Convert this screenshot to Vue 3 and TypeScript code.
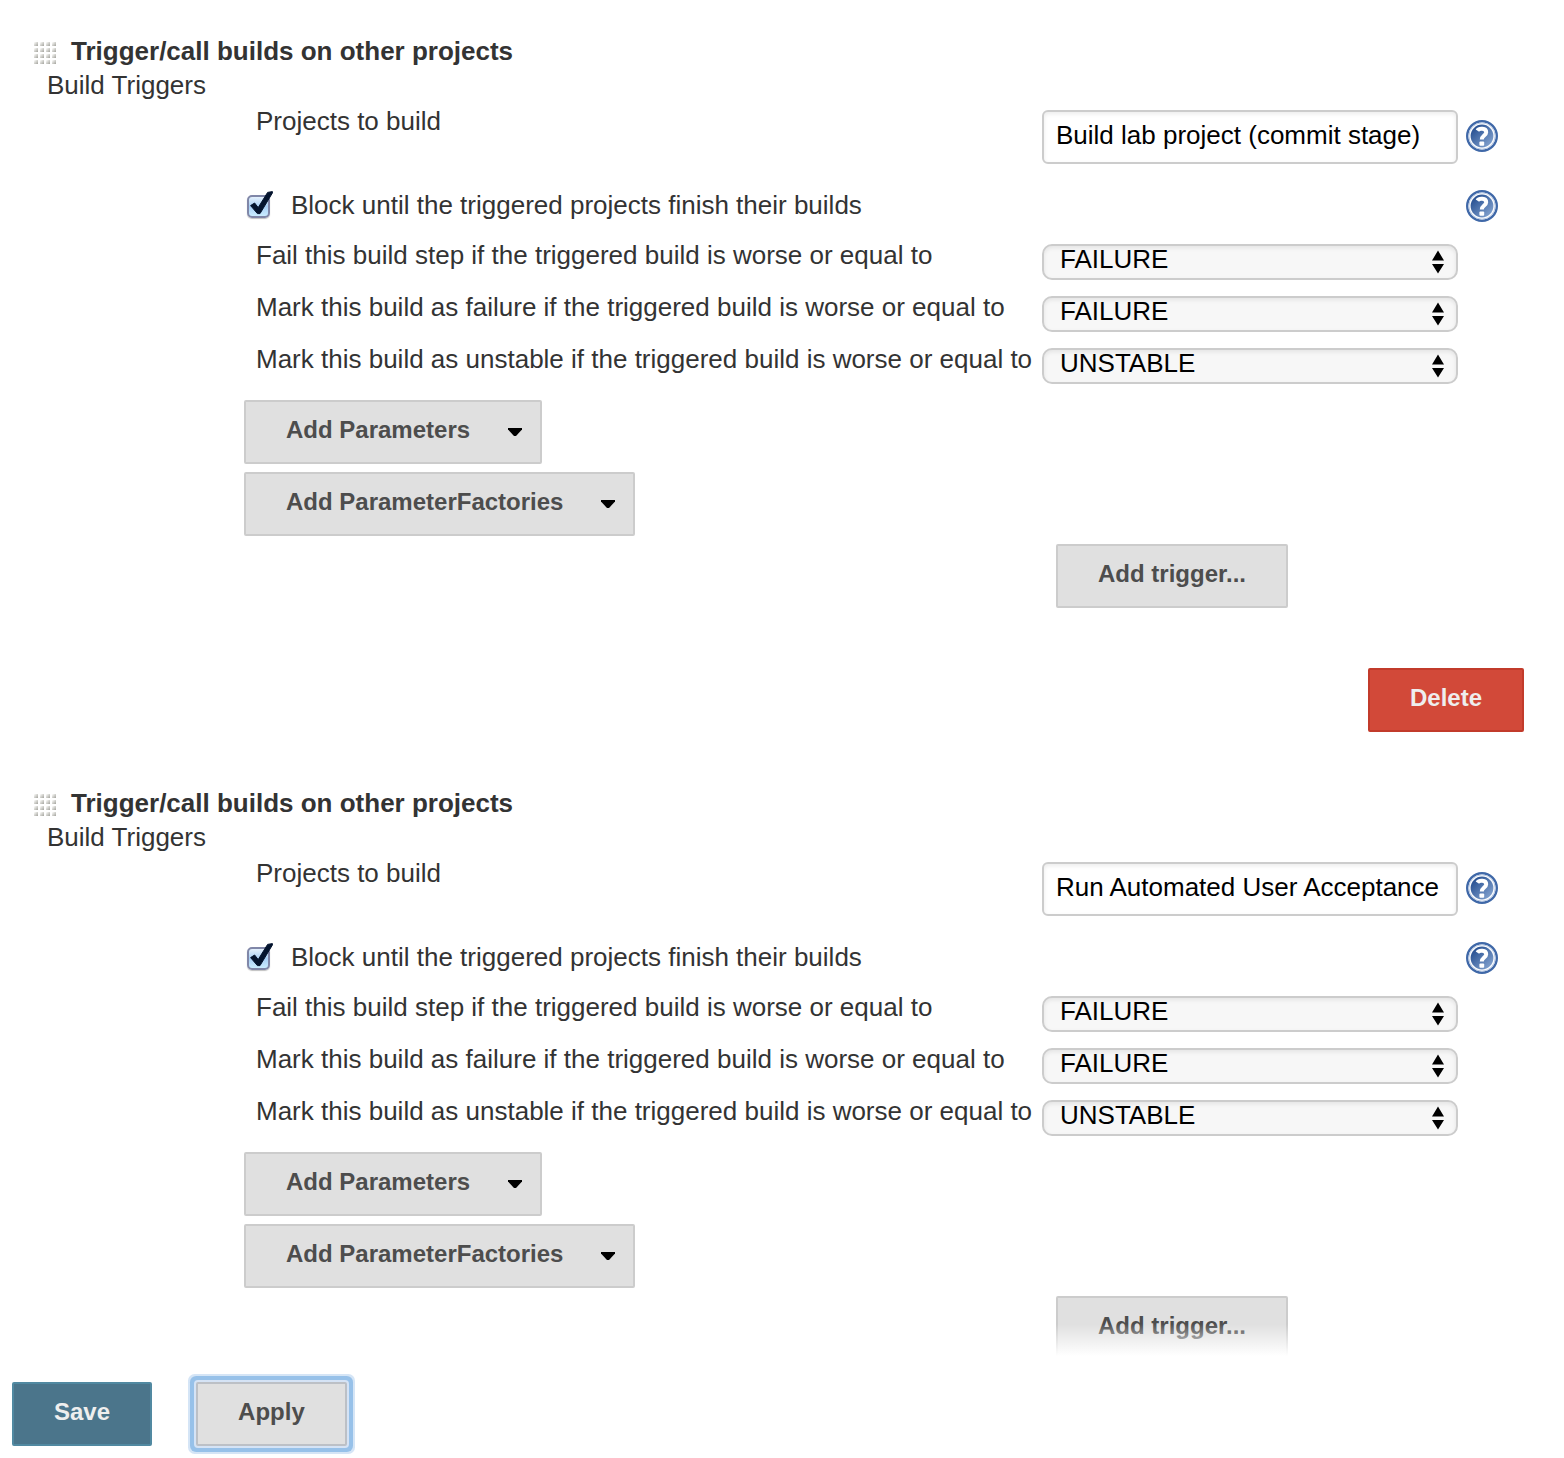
<script setup lang="ts">
import { reactive } from 'vue'

interface Threshold {
  label: string
  value: string
}

interface BuildStep {
  projects: string
  block: boolean
  thresholds: Threshold[]
  deletable: boolean
}

const results: string[] = ['SUCCESS', 'UNSTABLE', 'FAILURE']

const thresholds = (): Threshold[] => [
  { label: 'Fail this build step if the triggered build is worse or equal to', value: 'FAILURE' },
  { label: 'Mark this build as failure if the triggered build is worse or equal to', value: 'FAILURE' },
  { label: 'Mark this build as unstable if the triggered build is worse or equal to', value: 'UNSTABLE' },
]

const steps = reactive<BuildStep[]>([
  { projects: 'Build lab project (commit stage)', block: true, thresholds: thresholds(), deletable: true },
  { projects: 'Run Automated User Acceptance', block: true, thresholds: thresholds(), deletable: false },
])

const dots = [0, 6, 12, 18]
</script>

<template>
  <form class="page" @submit.prevent>
    <svg class="defs" width="0" height="0" aria-hidden="true">
      <defs>
        <linearGradient id="help-fill" x1="0" y1="0" x2="1" y2="1">
          <stop offset="0.2" stop-color="#2f5797" />
          <stop offset="0.85" stop-color="#7d9dcb" />
        </linearGradient>
        <linearGradient id="dot-fill" x1="0" y1="0" x2="1" y2="1">
          <stop offset="0.1" stop-color="#f8f8f6" />
          <stop offset="1" stop-color="#a2a29c" />
        </linearGradient>
        <symbol id="help" viewBox="0 0 32 32">
          <circle cx="16" cy="16" r="14.8" fill="#fff" stroke="#3f68a8" stroke-width="2.4" />
          <circle cx="16" cy="16" r="13.2" fill="none" stroke="#b9cae4" stroke-width="1" />
          <circle cx="16" cy="16" r="11.4" fill="url(#help-fill)" />
          <path d="M11.4 10.6C13 8 20.2 8 20.2 12.2C20.2 15.4 15.8 15.6 15.8 19.4" fill="none" stroke="#fff" stroke-width="4" />
          <rect x="13.4" y="21.6" width="4.8" height="4.2" rx="1" fill="#fff" />
        </symbol>
      </defs>
    </svg>

    <main>
      <section v-for="(step, i) in steps" :key="i" class="step">
        <header class="title">
          <svg class="grip" width="24" height="24" viewBox="0 0 24 24" aria-hidden="true">
            <template v-for="y in dots" :key="y">
              <rect v-for="x in dots" :key="x" :x="x" :y="y" width="4" height="4" fill="url(#dot-fill)" />
            </template>
          </svg>
          <h2>Trigger/call builds on other projects</h2>
        </header>
        <h3>Build Triggers</h3>

        <div class="row">
          <label :for="`projects-${i}`">Projects to build</label>
          <input :id="`projects-${i}`" v-model="step.projects" class="text" type="text" />
          <a class="help tall" href="#" aria-label="Help for Projects to build">
            <svg width="32" height="32"><use href="#help" /></svg>
          </a>
        </div>

        <div class="check-row">
          <label class="check">
            <span class="tick">
              <input v-model="step.block" type="checkbox" />
              <svg v-if="step.block" width="28" height="28" viewBox="0 0 28 28" aria-hidden="true">
                <path d="M3.6 14.6L7.6 12L11.2 16.6L20.6 1.4L25.4 .6V2L13 22.6H10.4Z" fill="#04142e" stroke="#04142e" stroke-width="1" stroke-linejoin="round" />
              </svg>
            </span>
            Block until the triggered projects finish their builds
          </label>
          <a class="help" href="#" aria-label="Help for Block until finished">
            <svg width="32" height="32"><use href="#help" /></svg>
          </a>
        </div>

        <div class="thresholds">
          <div v-for="(item, n) in step.thresholds" :key="n" class="row">
            <label :for="`threshold-${i}-${n}`">{{ item.label }}</label>
            <span class="select">
              <select :id="`threshold-${i}-${n}`" v-model="item.value">
                <option v-for="r in results" :key="r">{{ r }}</option>
              </select>
              <svg width="12" height="24" viewBox="0 0 12 24" aria-hidden="true">
                <path d="M6 0.6L12 10.4H0ZM0 14H12L6 23.6Z" />
              </svg>
            </span>
          </div>
        </div>

        <div class="menus">
          <button type="button" class="menu">
            Add Parameters
            <svg width="16" height="8" viewBox="0 0 16 8" aria-hidden="true"><path d="M1 0H15V1.4L9 8H7L1 1.4Z" /></svg>
          </button>
          <button type="button" class="menu">
            Add ParameterFactories
            <svg width="16" height="8" viewBox="0 0 16 8" aria-hidden="true"><path d="M1 0H15V1.4L9 8H7L1 1.4Z" /></svg>
          </button>
          <button type="button" class="trigger">Add trigger...</button>
        </div>

        <button v-if="step.deletable" type="button" class="delete">Delete</button>
      </section>
    </main>

    <footer>
      <button type="submit" class="save">Save</button>
      <button type="button" class="apply">Apply</button>
    </footer>
  </form>
</template>

<style>
body {
  margin: 0;
  background: #fff;
}
</style>

<style scoped>
.page,
input,
select,
button {
  font-family: "Liberation Sans", Arial, Helvetica, sans-serif;
  font-size: 26px;
}

.page {
  color: #333;
  line-height: 34px;
}

.defs {
  position: absolute;
}

.step {
  display: flex;
  flex-direction: column;
  padding-top: 34px;
}

.step + .step {
  padding-top: 54px;
}

.title {
  display: flex;
  align-items: center;
  gap: 13px;
  padding-left: 34px;
}

.grip {
  margin-top: 6px;
}

h2,
h3 {
  margin: 0;
  font-size: 26px;
}

h3 {
  padding-left: 47px;
  margin-bottom: 2px;
  font-weight: 400;
}

.row {
  display: grid;
  grid-template-columns: 778px minmax(0, 1fr) 32px;
  align-items: start;
  column-gap: 8px;
  padding: 0 66px 0 256px;
}

.row > label {
  white-space: nowrap;
}

.row > .text,
.row > .select {
  margin-top: 6px;
}

.text {
  box-sizing: border-box;
  width: 100%;
  height: 54px;
  padding: 0 12px 4px;
  border: 2px solid #ccc;
  border-radius: 6px;
  background: #fff;
  box-shadow: inset 0 2px 4px rgba(0, 0, 0, 0.08);
  color: #000;
}

.help {
  display: block;
  height: 32px;
}

.help svg {
  display: block;
}

.tall {
  margin-top: 16px;
}

.check-row {
  display: flex;
  align-items: center;
  justify-content: space-between;
  height: 32px;
  margin: 26px 66px 16px 247px;
}

.check {
  display: flex;
  align-items: center;
  gap: 20px;
  padding-bottom: 2px;
}

.tick {
  position: relative;
  width: 24px;
  height: 24px;
}

.tick input {
  display: block;
  appearance: none;
  box-sizing: border-box;
  width: 23px;
  height: 23px;
  margin: 2px 0 0;
  border: 2px solid #8087a8;
  border-radius: 5px;
  background: linear-gradient(#e4f1fd, #a9cff5 50%, #c9ecff);
  box-shadow: 0 1px 1px rgba(0, 0, 0, 0.25);
}

.tick svg {
  position: absolute;
  left: 0;
  top: -2px;
  pointer-events: none;
}

.thresholds {
  display: flex;
  flex-direction: column;
  gap: 10px;
}

.select {
  position: relative;
}

select {
  display: block;
  appearance: none;
  box-sizing: border-box;
  width: 100%;
  height: 36px;
  margin: 0;
  padding: 0 40px 6px 16px;
  border: 2px solid #ccc;
  border-radius: 10px;
  background: #f7f7f7;
  box-shadow: inset 0 2px 4px rgba(0, 0, 0, 0.08);
  color: #000;
  line-height: 26px;
}

.select svg {
  position: absolute;
  right: 14px;
  top: 6px;
  pointer-events: none;
}

.menus {
  display: flex;
  flex-direction: column;
  align-items: flex-start;
  gap: 8px;
  margin: 16px 0 0 244px;
}

button {
  box-sizing: border-box;
  height: 64px;
  padding: 0 40px 4px;
  border: 2px solid #ccc;
  border-radius: 2px;
  background: #e0e0e0;
  color: #4d4d4d;
  font-size: 24px;
  font-weight: 700;
}

.menu {
  display: flex;
  align-items: center;
  gap: 37px;
  padding-right: 17px;
}

.menu svg {
  margin-top: 4px;
}

.trigger {
  margin-left: 812px;
}

.delete {
  align-self: flex-end;
  margin: 60px 40px 0 0;
  border-color: #c23b2b;
  background: #d24939;
  color: #eee;
}

footer {
  position: sticky;
  bottom: 0;
  display: flex;
  gap: 44px;
  margin-top: -4px;
  padding: 26px 12px 12px;
  background: #fff;
}

footer::before {
  content: "";
  position: absolute;
  left: 0;
  right: 0;
  bottom: 100%;
  height: 32px;
  background: linear-gradient(rgba(255, 255, 255, 0), #fff);
}

.save {
  border-color: #5189a1;
  background: #4b758b;
  color: #eee;
}

.apply {
  border-color: #bcc0c6;
  box-shadow: 0 0 0 2px #d5e3f5, 0 0 0 6px #97c1e9, 0 0 0 8px #d5e5f6;
}
</style>
